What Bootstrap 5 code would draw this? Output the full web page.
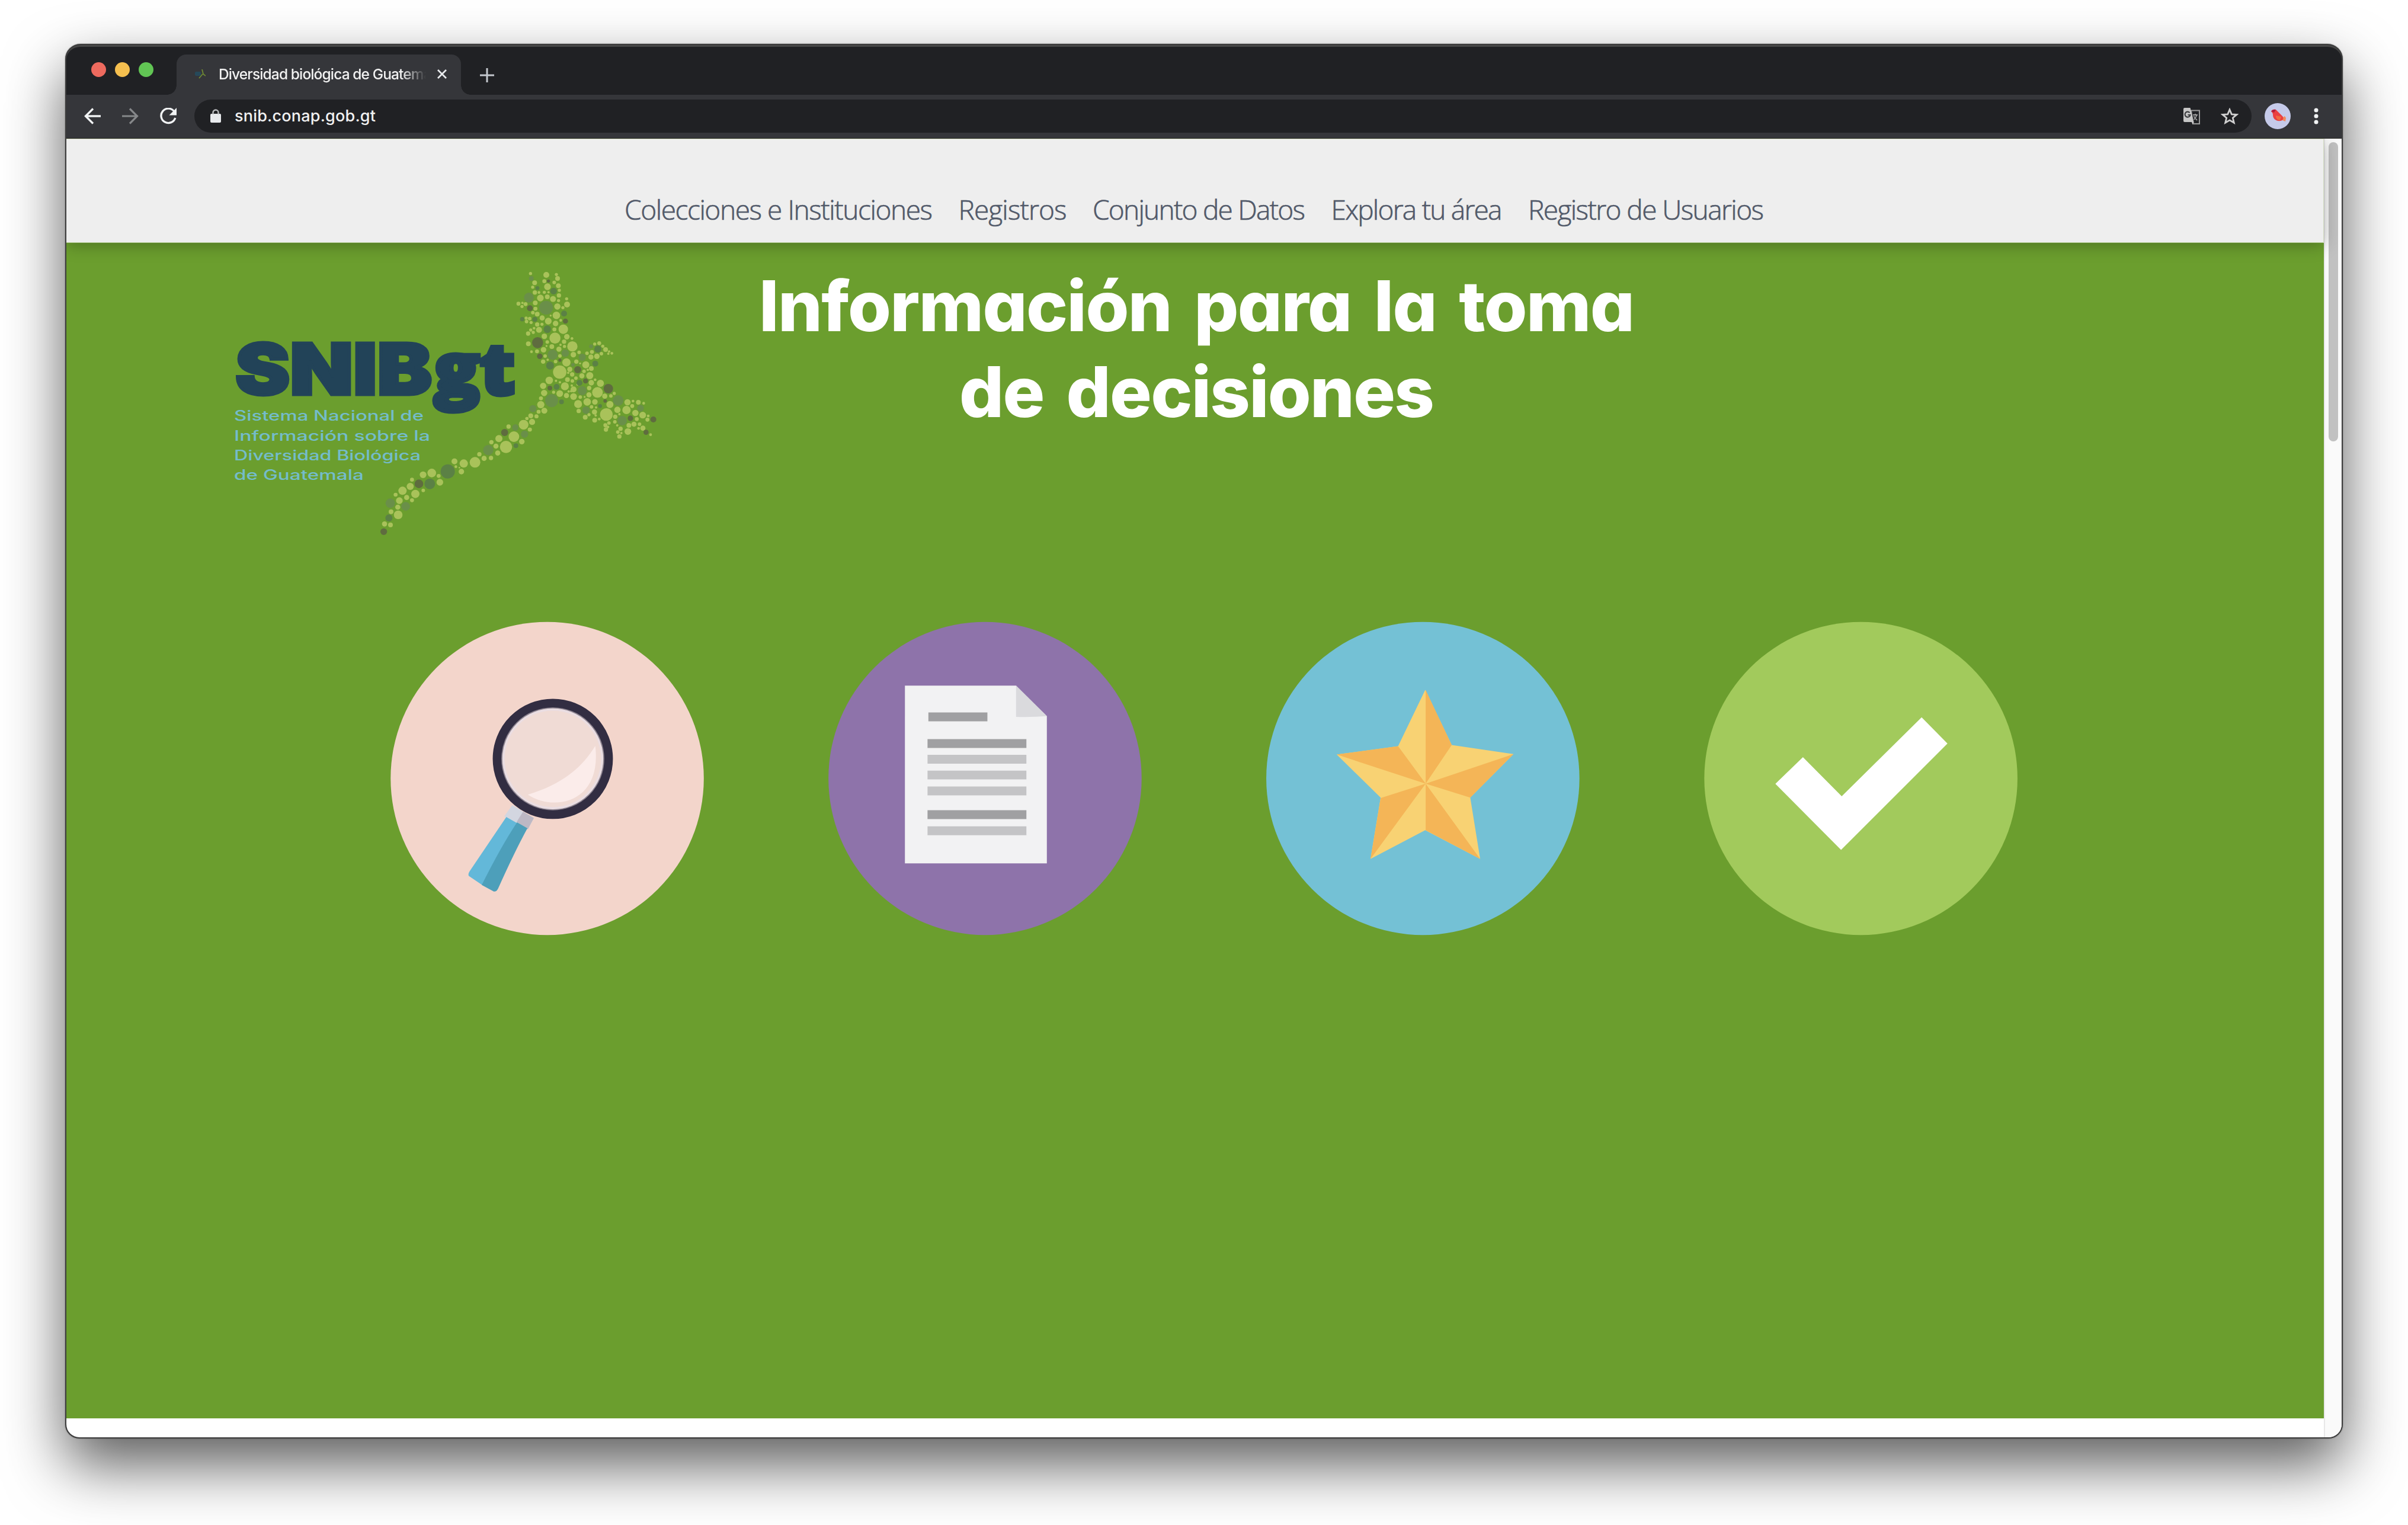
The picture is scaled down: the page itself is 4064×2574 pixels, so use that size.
<!DOCTYPE html>
<html lang="es">
<head>
<meta charset="utf-8">
<title>Diversidad biológica de Guatemala</title>
<link href="https://cdn.jsdelivr.net/npm/bootstrap@5.3.0/dist/css/bootstrap.min.css" rel="stylesheet">
<style>
body{background:#fff;width:4064px;height:2574px;overflow:hidden;padding:74px 110px 146px;font-family:Inter,"Liberation Sans",sans-serif}
svg{display:block;flex:none}
.win{height:2354px;border-radius:26px 26px 24px 24px;background:#35363a;border:2px solid #3c3c3c;box-shadow:0 45px 100px rgba(0,0,0,.64),0 0 2px rgba(0,0,0,.5);position:relative}
.tabstrip{height:84px;background:#202124;border-top:3px solid #474747;border-radius:24px 24px 0 0;padding-left:42px}
.lights{gap:15px;padding-top:26px}
.lights i{width:25px;height:25px;border-radius:50%}
.tab{width:480px;height:68px;margin:13px 0 0 39px;background:#35363a;border-radius:16px 16px 0 0;padding:0 0 2px 31px;position:relative}
.tab::before,.tab::after{content:"";position:absolute;bottom:0;width:16px;height:16px}
.tab::before{left:-16px;background:radial-gradient(circle at 0 0,transparent 15.5px,#35363a 16px)}
.tab::after{right:-16px;background:radial-gradient(circle at 100% 0,transparent 15.5px,#35363a 16px)}
.tabtitle{margin-left:22px;width:350px;overflow:hidden;white-space:nowrap;font-size:24.5px;line-height:34px;color:#f1f1f1;font-weight:500;-webkit-mask:linear-gradient(90deg,#000 88%,transparent 100%);mask:linear-gradient(90deg,#000 88%,transparent 100%)}
.toolbar{height:73px;background:#35363a;padding:0 0 2px 30px}
.omni{width:3472px;height:56px;border-radius:28px;background:#202124;margin-left:30px;padding:0 22px 0 27px}
.url{font-size:27px;font-weight:500;color:#f1f1f1;white-space:nowrap;margin-left:23px;line-height:40px}
.view{height:2193px;border-top:1px solid #23241f;border-radius:0 0 22px 22px;overflow:hidden;background:#fff}
.sitenav{height:176px;background:#eee;border-top:1px solid #d3dcc2;border-bottom:1px solid #b4cc95;border-right:1px solid #d3dcc2;box-shadow:0 4px 26px rgba(0,0,0,.28);padding:93px 0 0 942px;gap:43.5px;position:relative;z-index:1}
.sitenav a{font-family:"Open Sans","Noto Sans",sans-serif;font-weight:300;font-stretch:90%;font-size:46px;line-height:50px;color:#525a6a;-webkit-text-stroke:.7px #525a6a;text-decoration:none;white-space:nowrap}
.hero{height:1984px;background:#6b9e2e}
.hero h1{width:1800px;margin:0;padding-top:34px;font-size:118px;line-height:144.500px;font-weight:800;color:#fff;font-feature-settings:"cv11";word-spacing:14px;white-space:nowrap;text-align:center}
.brand{margin-left:268px;margin-top:30px}
.steps{gap:170px;margin:110px 0 0 528px}
.sbar{width:30px;background:#fafafa;border-left:2px solid #e8e8e8;padding:6px 0 0 6px}
.sbar div{width:16px;height:505px;border-radius:8px;background:#c1c1c1}
</style>
<script src="https://cdn.jsdelivr.net/npm/bootstrap@5.3.0/dist/js/bootstrap.bundle.min.js"></script>
</head>
<body>
<div class="win d-flex flex-column">
  <div class="tabstrip d-flex">
    <div class="lights d-flex"><i style="background:#ed6a5e"></i><i style="background:#f5bf4f"></i><i style="background:#61c554"></i></div>
    <div class="tab d-flex align-items-center">
      <svg width="18" height="16" viewBox="0 0 18 16"><rect y="4" width="10" height="7" fill="#26495a" rx="2"/><path d="M12 0l2 8 4 3M13 8l-6 7" stroke="#6f8a34" stroke-width="1.8" fill="none"/></svg>
      <span class="tabtitle" data-w="378">Diversidad biológica de Guatemala</span>
      <svg width="16" height="16" viewBox="0 0 16 16" style="margin-left:19px"><path d="M1 1l14 14M15 1L1 15" stroke="#e8eaed" stroke-width="2.8"/></svg>
    </div>
    <svg width="24" height="24" viewBox="0 0 24 24" style="margin:36px 0 0 32px"><path d="M12 0v24M0 12h24" stroke="#c3c8ce" stroke-width="3"/></svg>
  </div>
  <div class="toolbar d-flex align-items-center">
    <svg width="28" height="28" viewBox="0 0 28 28"><path d="M28 14H3M15 1.5L2.500 14 15 26.500" stroke="#f1f3f4" stroke-width="3.4" fill="none"/></svg>
    <svg width="28" height="28" viewBox="0 0 28 28" style="margin-left:36px"><path d="M0 14h25M13 1.500L25.500 14 13 26.500" stroke="#86888a" stroke-width="3.2" fill="none"/></svg>
    <svg width="28" height="28" viewBox="0 0 28 28" style="margin-left:36px"><path d="M23.500 5.500A12.200 12.200 0 1 0 25.800 17" stroke="#f1f3f4" stroke-width="3.4" fill="none"/><path d="M28 0v12.500H15.500z" fill="#f1f3f4"/></svg>
    <div class="omni d-flex align-items-center">
      <svg width="18" height="24" viewBox="0 0 18 24"><rect y="8" width="18" height="15" rx="2" fill="#e8eaed"/><path d="M4.500 9V6a4.500 4.500 0 0 1 9 0v3" stroke="#b9bbbe" stroke-width="2.400" fill="none"/></svg>
      <span class="url" data-w="238">snib.conap.gob.gt</span>
      <svg class="ms-auto" width="28" height="28" viewBox="0 0 28 28"><path d="M13 4.500h14v22.500H16z" fill="none" stroke="#9b9b9b" stroke-width="2"/><path d="M2 0h9.500l6 24H2a2 2 0 0 1-2-2V2a2 2 0 0 1 2-2z" fill="#c6c6c6"/><path d="M14 24h4l-2.500 4z" fill="#c6c6c6"/><path d="M10.500 8.200A4.500 4.500 0 1 0 11.500 12H7.500" fill="none" stroke="#3a3b3e" stroke-width="2.200"/><path d="M16 12h8M20 10v2M22.500 12c-1 4-3.500 6-5 8M17.500 14c1 3 4 5 5.500 7" fill="none" stroke="#9b9b9b" stroke-width="1.800"/></svg>
      <svg width="30" height="28" viewBox="0 0 30 28" style="margin-left:35px"><path d="M15 3l3.300 7.800 8.500.7-6.500 5.500 2 8.200L15 20.800l-7.300 4.400 2-8.200-6.500-5.500 8.500-.7z" fill="none" stroke="#cfcfcf" stroke-width="2.800"/></svg>
    </div>
    <svg width="44" height="44" viewBox="0 0 44 44" style="margin-left:22px"><circle cx="22" cy="22" r="22" fill="#c5cae9"/><path d="M24 29l10-7 2 3-1 6-5-2z" fill="#f08a5d"/><path d="M11 14c2-4 8-4 10-1l8 8c4 3 3 8-2 9-7 1-13-3-13-10 0-3-1-4-3-6z" fill="#ea3f40"/><path d="M11 14c2-3 5-4 8-3l-3 5z" fill="#b01f3c"/><path d="M19 21l9 2-2 6c-4 0-7-3-7-8z" fill="#f06a3f"/></svg>
    <svg width="8" height="28" viewBox="0 0 8 28" style="margin-left:39px"><g fill="#f1f3f4"><circle cx="4" cy="4" r="3.500"/><circle cx="4" cy="14" r="3.500"/><circle cx="4" cy="24" r="3.500"/></g></svg>
  </div>
  <div class="view d-flex">
    <main class="flex-grow-1">
      <nav class="sitenav d-flex">
        <a href="#" data-w="520">Colecciones e Instituciones</a><a href="#" data-w="183">Registros</a><a href="#" data-w="359">Conjunto de Datos</a><a href="#" data-w="289">Explora tu área</a><a href="#" data-w="398">Registro de Usuarios</a>
      </nav>
      <section class="hero overflow-hidden">
        <div class="d-flex align-items-start">
          <svg class="brand" width="740" height="480" viewBox="380 440 740 480">
            <g fill="#224358" stroke="#224358">
              <text x="397" y="666" font-family="Inter" font-weight="900" font-size="119" stroke-width="5" textLength="332" lengthAdjust="spacingAndGlyphs">SNIB</text>
              <text x="732" y="666" font-family="Open Sans" font-weight="800" font-size="120" stroke-width="7" textLength="137" lengthAdjust="spacingAndGlyphs">gt</text>
            </g>
            <g font-family="Inter" font-size="24" font-weight="450" fill="#74bccb">
              <text x="395" y="709.500" textLength="320" lengthAdjust="spacingAndGlyphs">Sistema Nacional de</text>
              <text x="395" y="743.500" textLength="331" lengthAdjust="spacingAndGlyphs">Información sobre la</text>
              <text x="395" y="776.500" textLength="315" lengthAdjust="spacingAndGlyphs">Diversidad Biológica</text>
              <text x="395" y="809.500" textLength="219" lengthAdjust="spacingAndGlyphs">de Guatemala</text>
            </g>
            <g id="body" transform="translate(865 450) scale(.33333)"></g>
            <g id="tail" transform="translate(635 680) scale(.33333)"></g>
          </svg>
          <h1><span data-w="1478">Información para la toma</span><br><span data-w="802">de decisiones</span></h1>
        </div>
        <div class="steps d-flex">
          <svg width="570" height="570" viewBox="0 0 1568 1568">
            <circle cx="780" cy="781" r="727" fill="#f3d5cb"/>
            <path d="M618 905l100 60-26 50-112-58z" fill="#d3d6e0"/><path d="M668 935l50 30-28 52-52-34z" fill="#bdb8c4"/>
            <path d="M590 960l50 28-162 288-62-42q-5-8 4-22z" fill="#63b8d9"/><path d="M640 985l48 27q-60 110-136 280-8 16-20 14l-56-30q90-180 164-291z" fill="#4d9fba"/>
            <circle cx="806" cy="690" r="258" fill="#f0dbd5" stroke="#322d42" stroke-width="42"/>
            <circle cx="806" cy="690" r="236" fill="none" stroke="#8d8490" stroke-width="6"/>
            <circle cx="806" cy="690" r="229" fill="none" stroke="#eadde2" stroke-width="10"/>
            <path d="M1003 630C960 700 880 800 690 856c120 80 345 40 313-226z" fill="#fbecea"/>
          </svg>
          <svg width="570" height="570" viewBox="0 0 1568 1568">
            <circle cx="777" cy="781" r="727" fill="#8e73aa"/>
            <path d="M405 350h516l143 142v683H405z" fill="#f2f2f3"/><path d="M921 350l143 142q-70 5-143 3z" fill="#dadadd"/>
            <path d="M514 495h274M510 619h459M510 949h459" stroke="#a0a0a2" stroke-width="41"/>
            <path d="M510 692h459M510 765h459M510 839h459M510 1024h459" stroke="#c4c4c6" stroke-width="41"/>
          </svg>
          <svg width="570" height="570" viewBox="0 0 1568 1568">
            <circle cx="774" cy="781" r="727" fill="#74c1d5"/>
            <path d="M785 370l123 256 287 42-201 202 46 285-255-134-254 134 47-285-204-200 285-39z" fill="#f8d273"/>
            <path d="M787 805V370l121 256zM787 805l408-137-201 202zM787 805l253 350-253-134zM787 805L531 1155l47-283zM787 805L374 670l285-39z" fill="#f4b557"/>
          </svg>
          <svg width="570" height="570" viewBox="0 0 1568 1568">
            <circle cx="772" cy="781" r="727" fill="#a2ca5c"/>
            <path d="M375 806l128-124 180 182 371-367 120 122-494 494z" fill="#fff"/>
          </svg>
        </div>
      </section>
    </main>
    <div class="sbar"><div></div></div>
  </div>
</div>
<script>
// Circle mosaic of the bird mark: groups of x,y,r per colour
const body={
 '#a9c25a':'91,35,8 171,42,15 222,40,8 228,60,12 161,74,10 211,80,9 112,82,12 102,104,8 177,102,17 232,97,12 237,120,8 113,131,11 134,131,7 161,130,8 182,130,6 235,146,11 176,153,12 141,159,17 205,164,15 233,172,8 274,163,8 115,184,12 30,188,10 50,184,6 66,190,10 48,202,8 116,213,10 227,202,16 276,192,15 255,208,8 103,233,9 125,241,12 222,247,19 193,248,5 69,261,8 87,263,9 71,278,9 94,283,8 150,260,13 181,276,17 244,272,7 218,288,14 125,293,11 149,292,8 257,317,24 134,320,15 212,318,10 109,312,7 92,321,8 105,333,8 79,339,11 161,353,14 275,355,14 301,364,7 215,362,28 261,380,11 176,382,9 80,391,12 303,404,26 199,405,12 172,402,5 243,396,6 263,404,8 235,418,13 157,421,14 124,429,10 96,431,7 308,446,14 337,434,9 165,453,9 240,452,9 178,472,6 155,481,11 218,481,9 273,485,21 323,481,11 290,520,13 371,497,18 399,516,12 342,490,5 397,458,13 427,454,14 377,439,9 402,432,10 416,392,8 439,388,10 457,403,8 471,420,12 450,441,9 489,430,6 503,439,7 485,441,6 362,530,9 381,523,6 239,534,34 302,546,11 282,538,6 351,553,13 391,552,18 321,565,9 278,572,12 303,579,9 186,576,19 220,578,6 240,586,6 155,604,16 265,606,20 329,597,6 399,588,14 418,573,7 445,591,18 388,615,11 309,622,15 300,602,6 208,636,8 160,640,16 239,643,17 284,632,6 297,631,6 273,653,13 309,658,17 343,661,9 365,660,5 387,649,13 430,637,27 467,656,13 498,655,9 515,642,8 144,667,10 143,699,18 161,730,15 132,735,10 378,685,19 417,685,14 332,696,20 335,731,11 493,698,18 400,710,9 423,713,6 415,736,13 387,750,8 368,763,12 439,772,7 421,754,6 416,778,12 475,749,32 531,725,16 577,726,21 541,747,6 520,760,11 518,786,9 582,687,16 610,681,7 637,687,12 664,692,7 606,706,10 622,741,16 659,752,17 629,772,10 687,756,7 683,775,10 589,804,12 615,798,13 643,798,9 638,819,7 660,818,13 547,821,11 530,804,6 533,838,9 551,843,6 541,860,11 584,835,17 470,803,10 488,792,9 483,812,7 473,825,11 699,851,7 92,755,12 73,769,8 121,758,10 56,801,24 99,787,15 87,825,10',
 '#6a8f49':'95,60,12 83,157,25 170,208,35 398,404,10 353,459,18 267,438,19 203,446,26 353,628,23 198,679,33 372,727,19 535,678,27 648,717,17 555,780,24 103,719,18 306,497,9 15,814,15 61,848,18',
 '#5b8145':'126,109,10 208,124,17 261,238,15 49,266,11 113,267,13 176,317,19 432,418,18 419,491,15 190,501,20 339,589,15 223,609,15 248,685,12 443,706,10',
 '#5f6c3f':'182,73,8 88,211,15 268,276,13 127,385,28 138,454,14 240,474,8 330,522,18 370,579,13 189,615,12 485,618,24 469,680,9 597,768,14 713,774,15 676,839,13'};
const tail={
 '#a9c25a':'833,9,18 851,40,14 822,45,9 783,66,11 763,79,8 812,69,9 746,110,24 789,97,15 778,135,10 670,120,11 697,171,27 737,196,14 621,181,18 583,199,11 606,219,13 657,223,31 615,254,13 522,260,11 546,281,13 581,279,11 500,301,27 443,307,21 396,296,15 403,323,7 421,328,4 431,348,14 281,355,22 237,364,17 316,370,10 322,402,17 181,389,10 172,423,18 238,443,9 198,461,21 133,445,21 98,465,10 154,479,13 181,493,10 117,495,17 109,528,13 75,551,12 111,567,22 42,613,13 72,618,12',
 '#6a8f49':'793,29,17 704,125,16 751,158,18 567,239,26 71,508,24 149,524,22',
 '#5b8145':'707,217,12 362,347,36 271,410,27 64,583,18',
 '#5f6c3f':'650,150,18 216,410,22 38,652,17'};
function draw(id,set){
  const g=document.getElementById(id);
  for(const color in set) for(const c of set[color].split(' ')){
    const [x,y,r]=c.split(','),e=document.createElementNS('http://www.w3.org/2000/svg','circle');
    e.setAttribute('cx',x);e.setAttribute('cy',y);e.setAttribute('r',r);e.setAttribute('fill',color);g.append(e);
  }
}
draw('body',body);draw('tail',tail);
// Track each label to its intended width
document.querySelectorAll('[data-w]').forEach(e=>{
  const r=document.createRange();r.selectNodeContents(e);
  const s=(e.dataset.w-r.getBoundingClientRect().width)/(e.textContent.length-1);
  e.style.letterSpacing=s+'px';
  if(!e.classList.contains('tabtitle'))e.style.marginRight=-s+'px';
});
</script>
</body>
</html>
